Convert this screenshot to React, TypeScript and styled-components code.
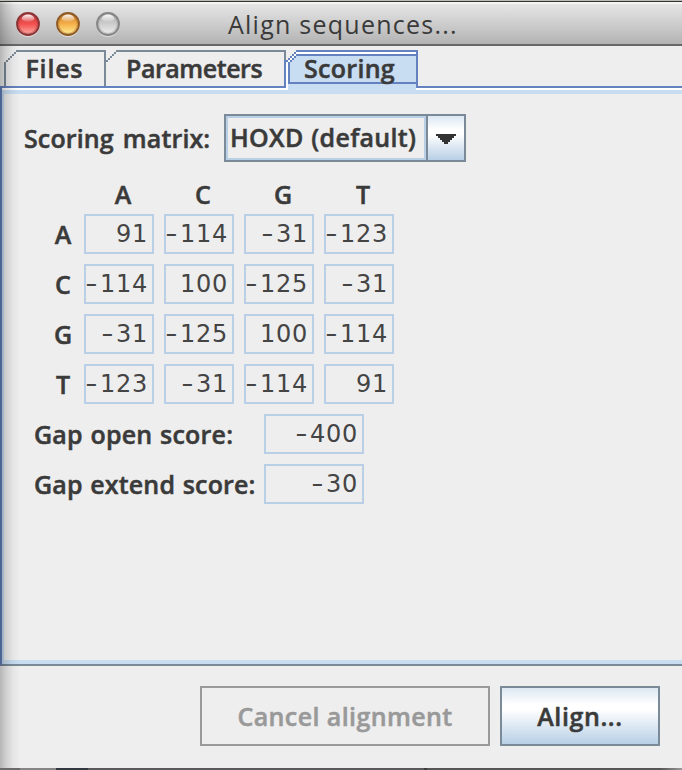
import React from "react";
import styled, { createGlobalStyle } from "styled-components";

const SLATE = "#7a8a99";
const BLUE = "#6382bf";
const PALE = "#c8ddf2";
const FACE = "#eeeeee";

const GlobalStyle = createGlobalStyle`
  * { box-sizing: border-box; }
  body { margin: 0; background: ${FACE}; overflow: hidden; }
`;

const Window = styled.div`
  position: relative;
  display: flex;
  flex-direction: column;
  width: 682px;
  height: 770px;
  background: ${FACE};
  color: #333;
  font-family: "Open Sans", "Noto Sans", sans-serif;
  font-size: 25px;
  line-height: 34px;
  overflow: hidden;
`;

const EdgeShade = styled.div`
  position: absolute;
  inset: 2px auto 2px 0;
  width: 20px;
  pointer-events: none;
  background: linear-gradient(to right, rgba(0, 0, 0, 0.24), rgba(0, 0, 0, 0.13) 30%, rgba(0, 0, 0, 0.04) 65%, transparent);
`;

const TitleBar = styled.header`
  position: relative;
  flex: none;
  display: flex;
  align-items: center;
  height: 46px;
  padding: 2px 0 0 16px;
  gap: 16px;
  border-top: 1px solid #b9beb7;
  border-bottom: 2px solid #686868;
  background: linear-gradient(#333 0 1px, #f5f6f3 1px 3px, #e5e5e5 3px, #cccccc 55%, #b3b3b3);
`;

const Lights = styled.div`
  display: flex;
  gap: 16px;
  width: 196px;
`;

const Light = styled.svg`
  display: block;
  width: 24px;
  height: 26px;
`;

const Copy = styled.span<{ $track?: number; $words?: number; $muted?: boolean }>`
  white-space: pre;
  letter-spacing: ${(p) => p.$track ?? 0}px;
  word-spacing: ${(p) => p.$words ?? 0}px;
  color: ${(p) => (p.$muted ? "#999" : "#3a3a3a")};
`;

const Strong = styled(Copy)`
  font-weight: 600;
  -webkit-text-stroke: 0.5px currentColor;
`;

const TabStrip = styled.nav`
  flex: none;
  display: flex;
  height: 40px;
  padding: 4px 0 0 4px;
`;

const Tab = styled.div<{ $width: number; $pad: number }>`
  position: relative;
  width: ${(p) => p.$width}px;
  height: 36px;
  padding: 1px 0 0 ${(p) => p.$pad}px;
  white-space: nowrap;

  > span { position: relative; }
`;

const TabShape = styled.svg`
  position: absolute;
  top: 0;
  left: 0;
  overflow: visible;
`;

const Panel = styled.main`
  flex: none;
  height: 580px;
  border-left: 2px solid ${BLUE};
  border-bottom: 2px solid ${SLATE};
`;

const PanelBody = styled.div`
  height: 100%;
  border-left: 2px solid ${PALE};
  border-bottom: 4px solid ${PALE};
`;

const PanelTop = styled.div`
  height: 8px;
  margin: 0 0 20px -2px;
  border-top: 2px solid ${BLUE};
  background: linear-gradient(#fff 0 2px, ${PALE} 2px);
`;

const MatrixChoice = styled.div`
  display: flex;
  height: 48px;
  padding-left: 20px;
`;

const ChoiceLabel = styled.div`
  width: 200px;
  padding-top: 7px;
`;

const Select = styled.div`
  display: flex;
  width: 242px;
  height: 48px;
  border: 2px solid ${SLATE};
`;

const SelectValue = styled.div`
  width: 200px;
  padding: 2px 0 0 2px;
  border: 2px solid #b8cfe5;
  white-space: nowrap;
`;

const SelectArrow = styled.div`
  flex: 1;
  display: flex;
  align-items: center;
  justify-content: center;
  padding-top: 2px;
  border-left: 2px solid ${SLATE};
  background: linear-gradient(#dde8f3, #fff 32%, #fff 42%, #b8cfe5);
`;

const ScoreGrid = styled.div`
  display: grid;
  grid-template-columns: 44px repeat(4, 70px);
  grid-template-rows: 42px repeat(4, 40px);
  column-gap: 10px;
  row-gap: 10px;
  padding-left: 26px;
`;

const ColumnHead = styled.div`
  padding: 15px 0 0 8px;
  text-align: center;
`;

const RowHead = styled.div`
  width: 20px;
  margin-left: 23px;
  padding-top: 3px;
  text-align: center;
`;

const Field = styled.div<{ $width?: number }>`
  display: flex;
  justify-content: flex-end;
  width: ${(p) => p.$width ?? 70}px;
  height: 40px;
  padding-right: 4px;
  border: 2px solid #b8cfe5;
  color: #444;
  font-family: "DejaVu Sans", sans-serif;
  font-size: 24px;
  line-height: 36px;
  white-space: nowrap;
`;

const GapRow = styled.div`
  display: flex;
  height: 40px;
  margin-top: 10px;
  padding-left: 30px;
`;

const GapLabel = styled.div`
  width: 230px;
  padding-top: 3px;
`;

const Footer = styled.footer`
  flex: 1;
  display: flex;
  justify-content: flex-end;
  gap: 10px;
  padding: 20px 22px 0 0;
`;

const Button = styled.div<{ $width: number; $disabled?: boolean }>`
  display: flex;
  justify-content: center;
  width: ${(p) => p.$width}px;
  height: 60px;
  padding-top: 11px;
  border: 2px solid ${(p) => (p.$disabled ? "#999" : SLATE)};
  background: ${(p) => (p.$disabled ? FACE : "linear-gradient(#dde8f3, #fff 30%, #fff 38%, #b8cfe5)")};
`;

const Backdrop = styled.div`
  flex: none;
  height: 2px;
  background: linear-gradient(to right, #6b6b6b 0 20px, #858585 20px 56px, #333840 56px 88px, #58585a 88px 424px, #3c3c3e 424px 427px, #555 427px 660px, #999);
`;

const BULBS = [
  { id: "close", rim: "#8c3436", top: "#c8383c", mid: "#f2504f", low: "#ffb3a8" },
  { id: "minimise", rim: "#8f5a24", top: "#c87a25", mid: "#f5b04a", low: "#fff29a" },
  { id: "zoom", rim: "#858585", top: "#adadad", mid: "#cdcdcd", low: "#f0f0f0" },
];

const MATRIX: [string, string[]][] = [
  ["A", ["91", "-114", "-31", "-123"]],
  ["C", ["-114", "100", "-125", "-31"]],
  ["G", ["-31", "-125", "100", "-114"]],
  ["T", ["-123", "-31", "-114", "91"]],
];

const GAPS = [
  { label: "Gap open score:", track: 0.2, words: 1, value: "-400" },
  { label: "Gap extend score:", track: 0.15, words: 1, value: "-30" },
];

/* The minus is wider than the font's hyphen. */
const Minus = styled.span`
  display: inline-block;
  transform: scaleX(1.42);
  transform-origin: right;
  margin-right: 2px;
`;

const Digits = styled.span`
  letter-spacing: 0.73px;
`;

function Score({ value, width }: { value: string; width?: number }) {
  const negative = value.startsWith("-");
  return (
    <Field $width={width}>
      {negative && <Minus>-</Minus>}
      <Digits>{negative ? value.slice(1) : value}</Digits>
    </Field>
  );
}

function Bulb({ bulb }: { bulb: (typeof BULBS)[number] }) {
  return (
    <Light viewBox="0 0 24 26">
      <defs>
        <linearGradient id={bulb.id} x1="0" y1="0" x2="0" y2="1">
          <stop offset="0" stopColor={bulb.top} />
          <stop offset="0.5" stopColor={bulb.mid} />
          <stop offset="1" stopColor={bulb.low} />
        </linearGradient>
        <linearGradient id={`${bulb.id}-gloss`} x1="0" y1="0" x2="0" y2="1">
          <stop offset="0" stopColor="#fff" stopOpacity="0.95" />
          <stop offset="1" stopColor="#fff" stopOpacity="0.1" />
        </linearGradient>
      </defs>
      <circle cx="12" cy="14.5" r="11.5" fill="#fff" opacity="0.45" />
      <circle cx="12" cy="13" r="11" fill={`url(#${bulb.id})`} stroke={bulb.rim} strokeWidth="1.8" />
      <circle cx="12" cy="13" r="9.6" fill="none" stroke={bulb.rim} strokeWidth="1.6" opacity="0.35" />
      <ellipse cx="12" cy="7.2" rx="6.2" ry="3.6" fill={`url(#${bulb.id}-gloss)`} />
    </Light>
  );
}

export default function App() {
  return (
    <Window>
      <GlobalStyle />
      <TitleBar>
        <Lights>
          {BULBS.map((b) => <Bulb key={b.id} bulb={b} />)}
        </Lights>
        <Copy $track={1.25}>Align sequences...</Copy>
      </TitleBar>

      <TabStrip>
        <Tab $width={102} $pad={21.5}>
          <TabShape width="102" height="36" shapeRendering="crispEdges" fill={SLATE}>
            <path d="M0 12h2v24H0zM2 10h2v2H2zM4 8h2v2H4zM6 6h2v2H6zM8 4h2v2H8zM10 2h2v2h-2zM12 0h90v2H12zM100 0h2v36h-2z" />
          </TabShape>
          <Strong $track={0.8}>Files</Strong>
        </Tab>
        <Tab $width={180} $pad={20}>
          <TabShape width="180" height="36" shapeRendering="crispEdges" fill={SLATE}>
            <path d="M0 10h2v2H0zM2 8h2v2H2zM4 6h2v2H4zM6 4h2v2H6zM8 2h2v2H8zM10 0h170v2H10zM178 0h2v10h-2z" />
          </TabShape>
          <Strong $track={-0.45}>Parameters</Strong>
        </Tab>
        <Tab $width={132} $pad={18}>
          <TabShape width="132" height="46" shapeRendering="crispEdges">
            <path fill={PALE} d="M4 6h126v28H4zM2 34h128v10H2z" />
            <path fill="#fff" d="M0 12h2v28H0zM2 10h2v2H2zM4 8h2v2H4zM6 6h2v2H6zM8 4h2v2H8zM10 2h120v2H10zM4 6h2v2H4zM2 8h2v2H2zM6 4h2v2H6z" />
            <path fill={BLUE} d="M-2 10h2v28h-2zM0 10h2v2H0zM2 8h2v2H2zM4 6h2v2H4zM6 4h2v2H6zM8 2h2v2H8zM10 0h122v2H10z" />
            <path fill={BLUE} d="M2 12h2v22H2zM4 10h2v2H4zM6 8h2v2H6zM8 6h2v2H8zM10 4h120v2H10zM2 32h128v2H2zM130 0h2v38h-2z" />
          </TabShape>
          <Strong $track={0.3}>Scoring</Strong>
        </Tab>
      </TabStrip>

      <Panel>
        <PanelBody>
          <PanelTop />
          <MatrixChoice>
            <ChoiceLabel><Strong $track={0.12} $words={2.5}>Scoring matrix:</Strong></ChoiceLabel>
            <Select>
              <SelectValue><Strong $track={0.3} $words={1}>HOXD (default)</Strong></SelectValue>
              <SelectArrow>
                <svg width="20" height="10" shapeRendering="crispEdges" fill="#333">
                  <path d="M0 0h20v2h-2v2h-2v2h-2v2h-2v2H8V8H6V6H4V4H2V2H0z" />
                </svg>
              </SelectArrow>
            </Select>
          </MatrixChoice>

          <ScoreGrid>
            <div />
            {MATRIX.map(([base]) => (
              <ColumnHead key={base}><Strong>{base}</Strong></ColumnHead>
            ))}
            {MATRIX.map(([base, row]) => (
              <React.Fragment key={base}>
                <RowHead><Strong>{base}</Strong></RowHead>
                {row.map((v, i) => <Score key={i} value={v} />)}
              </React.Fragment>
            ))}
          </ScoreGrid>

          {GAPS.map((g) => (
            <GapRow key={g.label}>
              <GapLabel><Strong $track={g.track} $words={g.words}>{g.label}</Strong></GapLabel>
              <Score value={g.value} width={100} />
            </GapRow>
          ))}
        </PanelBody>
      </Panel>

      <Footer>
        <Button $width={290} $disabled><Strong $track={0.4} $muted>Cancel alignment</Strong></Button>
        <Button $width={160}><Strong $track={0.6}>Align...</Strong></Button>
      </Footer>
      <Backdrop />
      <EdgeShade />
    </Window>
  );
}
